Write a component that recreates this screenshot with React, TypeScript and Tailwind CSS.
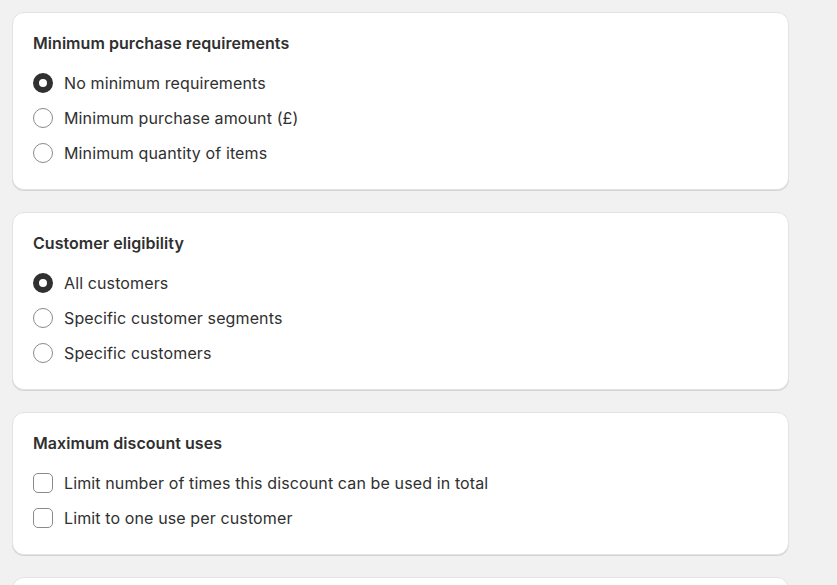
import React from 'react';

type Option = { label: string; checked?: boolean };

function Radio({ checked }: { checked?: boolean }) {
  return checked ? (
    <span className="box-border h-5 w-5 shrink-0 rounded-full border-[6px] border-[#303030] bg-white" />
  ) : (
    <span className="box-border h-5 w-5 shrink-0 rounded-full border border-[#8a8a8a] bg-white" />
  );
}

function Checkbox() {
  return <span className="box-border h-5 w-5 shrink-0 rounded-[5px] border border-[#8a8a8a] bg-white" />;
}

function Section({ title, options, kind }: { title: string; options: Option[]; kind: 'radio' | 'checkbox' }) {
  return (
    <div className="rounded-xl border border-[#e3e3e3] bg-white px-5 pb-[19px] pt-5 shadow-[0_1px_0_0_#d4d4d4]">
      <h2 className="text-[16px] font-semibold leading-5 tracking-[0.05px] text-[#303030]">{title}</h2>
      {options.length > 0 && (
        <div className="mt-3 flex flex-col">
          {options.map((o) => (
            <label key={o.label} className="flex h-[35px] items-center gap-[11px]">
              {kind === 'radio' ? <Radio checked={o.checked} /> : <Checkbox />}
              <span className="text-[16px] leading-5 tracking-[0.12px] text-[#303030]">{o.label}</span>
            </label>
          ))}
        </div>
      )}
    </div>
  );
}

export default function App() {
  return (
    <div className="h-[585px] overflow-hidden bg-[#f1f1f1] pl-3 pr-12 pt-3 font-['Inter',sans-serif]">
      <div className="flex w-[777px] flex-col gap-[22px]">
        <Section
          title="Minimum purchase requirements"
          kind="radio"
          options={[
            { label: 'No minimum requirements', checked: true },
            { label: 'Minimum purchase amount (£)' },
            { label: 'Minimum quantity of items' },
          ]}
        />
        <Section
          title="Customer eligibility"
          kind="radio"
          options={[
            { label: 'All customers', checked: true },
            { label: 'Specific customer segments' },
            { label: 'Specific customers' },
          ]}
        />
        <Section
          title="Maximum discount uses"
          kind="checkbox"
          options={[
            { label: 'Limit number of times this discount can be used in total' },
            { label: 'Limit to one use per customer' },
          ]}
        />
        <Section title="" kind="checkbox" options={[]} />
      </div>
    </div>
  );
}
